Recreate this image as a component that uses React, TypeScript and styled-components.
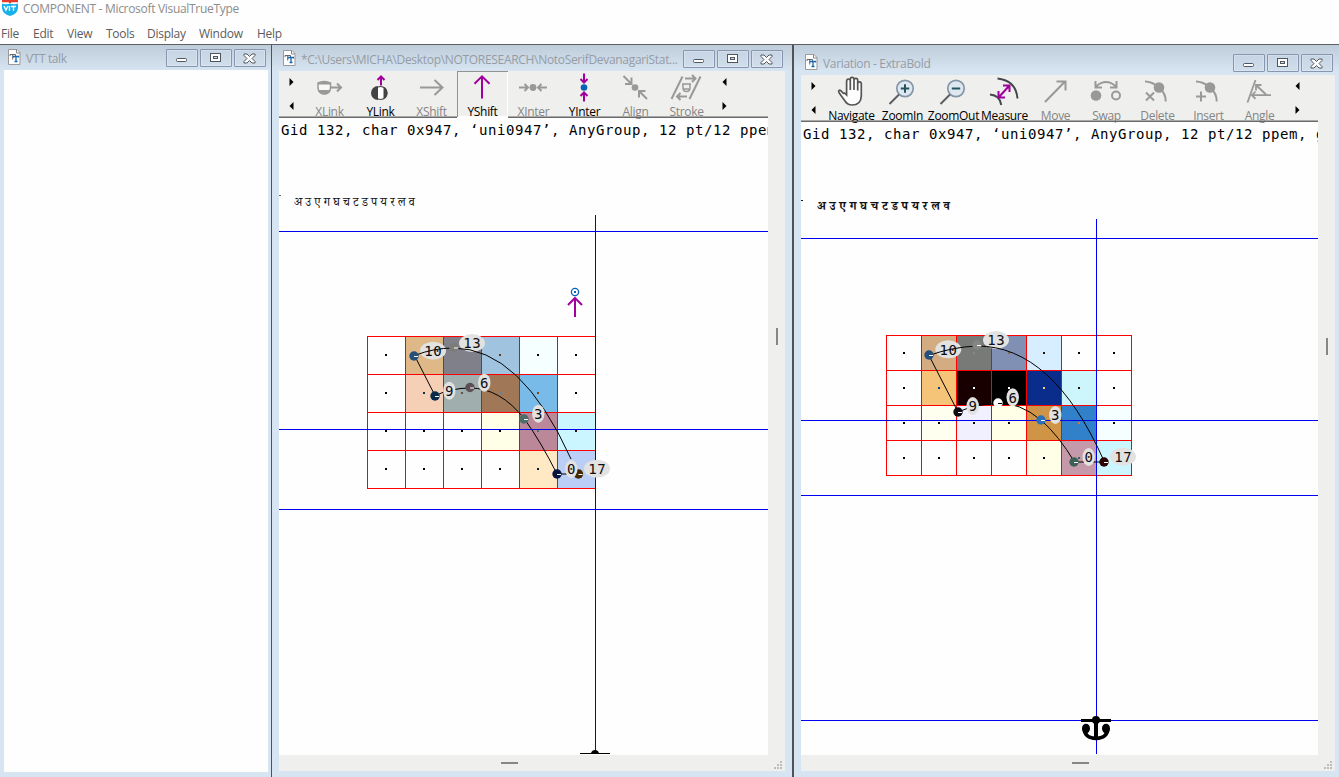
import React from "react";
import styled, { createGlobalStyle } from "styled-components";

const GlobalStyle = createGlobalStyle`
  * { box-sizing: border-box; }
  html, body { margin: 0; padding: 0; overflow: hidden; }
  body { font-family: "Open Sans", "Noto Sans", sans-serif; font-size: 12px; background: #fff; }
  svg { display: block; }
`;

const Page = styled.div`
  width: 1339px;
  height: 777px;
  display: flex;
  flex-direction: column;
  background: #fefefe;
  overflow: hidden;
`;

const AppTitle = styled.header`
  height: 20px;
  flex: none;
  display: flex;
  align-items: flex-start;
  padding-left: 2px;
  gap: 5px;
  color: #8c8c8c;
  font-size: 12px;
  line-height: 18px;
  letter-spacing: -0.31px;
  white-space: nowrap;
`;

const MenuBar = styled.nav`
  height: 24px;
  flex: none;
  display: grid;
  grid-template-columns: 32px 34px 39px 41px 52px 58px 60px;
  padding-left: 1px;
  line-height: 28px;
  color: #5c5c5c;
  letter-spacing: -0.25px;
`;

const Desktop = styled.main`
  height: 733px;
  display: flex;
  border-top: 1px solid #5e6164;
  background: #d7e4f2;
`;

const Frame = styled.section<{ $width: number; $side: number; $edge: number; $bottom?: number }>`
  width: ${(p) => p.$width}px;
  flex: none;
  display: flex;
  flex-direction: column;
  padding: 0 ${(p) => p.$edge}px ${(p) => p.$bottom ?? 6}px ${(p) => p.$side}px;
  background: linear-gradient(#bfcddb, #d7e4f2 26px);
`;

const Divider = styled.div<{ $width: number }>`
  width: ${(p) => p.$width}px;
  flex: none;
  background: #505255;
`;

const Caption = styled.div<{ $height: number; $top: number; $pad: number; $right: number }>`
  height: ${(p) => p.$height}px;
  flex: none;
  display: flex;
  align-items: flex-start;
  padding-top: ${(p) => p.$top}px;
  padding-left: ${(p) => p.$pad}px;
  margin-right: ${(p) => p.$right}px;
  color: #959ca4;
`;

const CaptionText = styled.span<{ $spacing: number }>`
  flex: 1;
  min-width: 0;
  padding: 2px 0 0 5px;
  line-height: 16px;
  letter-spacing: ${(p) => p.$spacing}px;
  white-space: nowrap;
`;

const CaptionButtons = styled.div`
  display: flex;
  gap: 2px;
`;

const CaptionButton = styled.button`
  width: 32px;
  height: 18px;
  padding: 0 1px 0 0;
  display: flex;
  align-items: center;
  justify-content: center;
  border: 1px solid #8795b0;
  border-radius: 1px;
  background: linear-gradient(#c6d4e3, #d0deec);
  box-shadow: inset 0 0 0 1px rgba(255, 255, 255, 0.25);
`;

const Blank = styled.div`
  flex: 1;
  background: #fefefe;
`;

const Client = styled.div`
  flex: 1;
  display: grid;
  grid-template-columns: 1fr 17px;
  grid-template-rows: 1fr 16px;
  min-height: 0;
  background: #efefed;
`;

const View = styled.div`
  min-width: 0;
  min-height: 0;
  display: flex;
  flex-direction: column;
  background: #fefefe;
  overflow: hidden;
`;

const SideBar = styled.div<{ $offset: number }>`
  padding: ${(p) => p.$offset}px 0 0 8px;
`;
const SideMark = styled.div`
  width: 2px;
  height: 17px;
  background: #868686;
`;
const BottomBar = styled.div<{ $offset: number }>`
  padding: 7px 0 0 ${(p) => p.$offset}px;
`;
const BottomMark = styled.div`
  width: 17px;
  height: 2px;
  background: #868686;
`;

const Toolbar = styled.div`
  height: 46px;
  flex: none;
  display: flex;
  background: #efefed;
  box-shadow: inset 0 -1px 0 #aaa;
`;

const ToolbarLine = styled.div<{ $gap?: boolean }>`
  height: 1px;
  flex: none;
  background: ${(p) =>
    p.$gap
      ? "linear-gradient(90deg, #6a6a6a 178px, #fefefe 178px, #fefefe 229px, #6a6a6a 229px)"
      : "#6a6a6a"};
`;

const Scroller = styled.div`
  width: 25px;
  flex: none;
  display: flex;
  flex-direction: column;
  align-items: center;
  padding-top: 7px;
  gap: 16px;
`;

const Tool = styled.button<{ $off?: boolean; $selected?: boolean }>`
  width: 51px;
  height: 46px;
  flex: none;
  padding: 0;
  border: 0;
  display: flex;
  flex-direction: column;
  align-items: center;
  justify-content: flex-start;
  background: transparent;
  font: 12px "Open Sans", "Noto Sans", sans-serif;
  letter-spacing: -0.3px;
  color: ${(p) => (p.$off ? "#858585" : "#000")};
  box-shadow: ${(p) =>
    p.$selected ? "inset 1px 1px 0 #929292, inset -1px -1px 0 #fefefe" : "none"};
`;

const ToolName = styled.span`
  flex: none;
  height: 11px;
  line-height: 11px;
  white-space: nowrap;
`;

const Header = styled.div`
  height: 97px;
  flex: none;
  padding-left: 2px;
`;
const Status = styled.div`
  font: 14px/25px "DejaVu Sans Mono", monospace;
  letter-spacing: 0.57px;
  color: #000;
  white-space: pre;
`;
const Sample = styled.div<{ $bold?: boolean }>`
  display: flex;
  align-items: flex-start;
  margin: 50px 0 0 -2px;
  height: 24px;
  font: ${(p) => (p.$bold ? 700 : 400)} 12px/24px "Noto Serif Devanagari", "Noto Sans Devanagari", "Noto Sans", sans-serif;
  letter-spacing: ${(p) => (p.$bold ? 0.13 : 0)}px;
  color: #111;
`;
const SampleMark = styled.span<{ $bold?: boolean }>`
  width: 2px;
  height: 1px;
  margin: ${(p) => (p.$bold ? 3 : 2)}px ${(p) => (p.$bold ? 14 : 13)}px 0 0;
  background: ${(p) => (p.$bold ? "#111" : "#666")};
`;

const Handle = ({ d, stroke = "#999", w = 2, fill = "none" }: { d: string; stroke?: string; w?: number; fill?: string }) => (
  <path d={d} stroke={stroke} strokeWidth={w} fill={fill} />
);

const PURPLE = "#a0009c";
const BLUE = "#0a64b4";
const SLATE = "#5a5e62";

const icons: Record<string, React.ReactNode> = {
  XLink: (
    <>
      <path d="M14 11.500Q20 8.500 26.500 11.500V16.500Q26 22.500 20.300 22.500T14 16.500Z" fill="#f8f8f6" stroke="#999" strokeWidth="1.500" />
      <path d="M14 12Q20 8 26.500 12V13H14ZM14.500 18.500H26Q24.500 23 20.300 23T14.500 18.500Z" fill="#999" />
      <Handle d="M27 16H36.500M33 12L37 16L33 20" />
    </>
  ),
  YLink: (
    <>
      <circle cx="25.500" cy="21.500" r="6.500" fill="#fefefe" stroke="#444" strokeWidth="1.200" />
      <path d="M23 14.500A7 7 0 0 0 23 28.500Z" fill="#444" />
      <path d="M28.500 15.200A7 7 0 0 1 28.500 27.800Z" fill="#444" />
      <Handle d="M26 14V5M22.500 8.500L26 5L29.500 8.500" stroke={PURPLE} />
    </>
  ),
  XShift: <Handle d="M14 16H36.500M28.500 8.500L36.500 16L28.500 23.500" />,
  YShift: <Handle d="M25 27V5M17.500 12.300L25 4.800L32.500 12.300" stroke={PURPLE} />,
  XInter: (
    <>
      <circle cx="25" cy="16" r="3.400" fill="#999" />
      <Handle d="M11 16H20M16.500 12.500L20 16L16.500 19.500M39 16H30M33.500 12.500L30 16L33.500 19.500" />
    </>
  ),
  YInter: (
    <>
      <circle cx="25" cy="16" r="3.300" fill={BLUE} />
      <Handle d="M25 2V11M21.500 7.500L25 11L28.500 7.500M25 30V21M21.500 24.500L25 21L28.500 24.500" stroke={PURPLE} />
    </>
  ),
  Align: (
    <>
      <circle cx="25" cy="16" r="3.300" fill="#999" />
      <Handle d="M13.500 4.500L21 12M21.500 6V12.500H15M37 27.500L29.500 20M29 26V19.500H35.500" />
    </>
  ),
  Stroke: (
    <>
      <Handle d="M10.500 27.500L21.500 5M28.500 27.500L39.500 5M24 7H34M31 3.500L34.500 7L31 10.500M26 25H16.500M19.500 21.500L16 25L19.500 28.500" />
      <Handle d="M21 12.500H30M22 12.500V16Q22 20 25.500 20T29 16V12.500M21.500 17.500H29.500" w={1.5} />
    </>
  ),
  Navigate: (
    <path
      d="M18 18.500L14.800 15.200Q13 14 12.600 15.800Q12.600 17 15 20L19 25.500Q21.500 29.500 26 29.500Q35 29.500 35.300 20.500V8.500Q35.300 6.300 33.500 6.300Q31.700 6.300 31.700 8.500V5Q31.700 2.800 29.900 2.800Q28 2.800 28 5V4Q28 1.800 26 1.800Q24.300 1.800 24.300 4V6Q24.300 3.500 22.400 3.500Q20.600 3.500 20.600 6V19.500L18 17M24.300 5V14.500M28 4V14.500M31.700 7V15"
      fill="#fefefe"
      stroke="#555"
      strokeWidth="1.700"
    />
  ),
  ZoomIn: (
    <>
      <circle cx="28" cy="13" r="8.200" fill="#dfe8f0" stroke="#8496a6" strokeWidth="1.700" />
      <Handle d="M12.500 28.500L22 19" stroke={SLATE} />
      <Handle d="M28 8.800V17.200M23.800 13H32.200" stroke="#24535f" />
    </>
  ),
  ZoomOut: (
    <>
      <circle cx="28" cy="13" r="8.200" fill="#dfe8f0" stroke="#8496a6" strokeWidth="1.700" />
      <Handle d="M12.500 28.500L22 19" stroke={SLATE} />
      <Handle d="M23.800 13H32.200" stroke="#24535f" />
    </>
  ),
  Measure: (
    <>
      <Handle d="M18.500 3Q37 5 38.500 23M11 19Q21 20 22.300 29.500" stroke="#44484c" />
      <Handle d="M20 21.500L30 10.500M24 10H30.500V16.500M19.500 15.500V22H26" stroke={PURPLE} />
    </>
  ),
  Move: <Handle d="M15 26.500L35 6M26.500 6H35.500V15" />,
  Swap: (
    <>
      <circle cx="15" cy="20" r="5.300" fill="#999" />
      <circle cx="35" cy="20" r="4" fill="none" stroke="#999" strokeWidth="2" />
      <Handle d="M15 11Q25 2 35 11M14.500 5.500V12H21M35.500 5.500V12H29" />
    </>
  ),
  Delete: (
    <>
      <circle cx="27" cy="12" r="5.300" fill="#999" />
      <Handle d="M13 6Q20 6 27 12T33.700 26M14 17L22 25M22 17L14 25" />
    </>
  ),
  Insert: (
    <>
      <circle cx="27" cy="12" r="5.300" fill="#999" />
      <Handle d="M13 6Q20 6 27 12T33.700 26M18 16V26M13 21H23" />
    </>
  ),
  Angle: <Handle d="M13.500 27L21.500 4.500M37 19.700H18M21.500 16L18 19.700L21.500 23.300M32 19L22 9.500M22 15V9.500H27.500" w={1.8} />,
};

const DocIcon = () => (
  <svg width="13" height="16" viewBox="0 0 13 16">
    <path d="M0.500 0.500H9L12 3.500V15.500H0.500Z" fill="#fefefe" stroke="#9a9a9a" />
    <path d="M8.500 0.500V4H12" fill="none" stroke="#888" />
    <path d="M2 7V5.500H7.500V7M4.700 5.500V10.500" fill="none" stroke="#666" />
    <path d="M5.500 8.500V7.500H10.500V8.500M8 7.500V12.500M6.500 12.500H9.500" fill="none" stroke="#1768b0" strokeWidth="1.300" />
  </svg>
);

const ShieldLogo = () => (
  <svg width="16" height="17" viewBox="0 0 16 17">
    <path d="M0 3.500Q3.500 5 8 3.500Q12.500 5 16 3.500V8Q15.500 14 8 16Q0.500 14 0 8Z" fill="#16b1ea" />
    <path d="M0 1.200H16M8 0V3" stroke="#e33a2c" strokeWidth="2.200" />
    <path d="M2 6L4 10.200L6 6M7.500 6V10.800M9 6.500H14M11.500 6.500V10.800" fill="none" stroke="#fefefe" strokeWidth="1.400" />
  </svg>
);

const WindowButtons = () => (
  <CaptionButtons>
    <CaptionButton aria-label="Minimize">
      <svg width="12" height="12" viewBox="0 0 12 12">
        <rect x="0.500" y="6.500" width="10" height="3" rx="1" fill="#fefefe" stroke="#50565e" />
      </svg>
    </CaptionButton>
    <CaptionButton aria-label="Maximize">
      <svg width="12" height="12" viewBox="0 0 12 12">
        <rect x="0.500" y="1.500" width="10" height="8" fill="#fefefe" stroke="#50565e" />
        <rect x="3.500" y="4.500" width="4" height="2" fill="#d5e0ec" stroke="#50565e" />
      </svg>
    </CaptionButton>
    <CaptionButton aria-label="Close">
      <svg width="13" height="11" viewBox="0 0 13 11">
        <path d="M1 1H4L6.500 3.500L9 1H12V2.500L9 5.500L12 8.500V10H9L6.500 7.500L4 10H1V8.500L4 5.500L1 2.500Z" fill="#fefefe" stroke="#50565e" />
      </svg>
    </CaptionButton>
  </CaptionButtons>
);

const Arrow = ({ left }: { left?: boolean }) => (
  <svg width="5" height="8" viewBox="0 0 5 8">
    <path d={left ? "M4.500 0V8L0.500 4Z" : "M0.500 0V8L4.500 4Z"} fill="#000" />
  </svg>
);

type ToolSpec = [name: string, enabled?: boolean, selected?: boolean];

const Tools = ({ items }: { items: ToolSpec[] }) => (
  <Toolbar>
    <Scroller><Arrow /><Arrow left /></Scroller>
    {items.map(([name, on, selected]) => (
      <Tool key={name} $off={!on} $selected={selected}>
        <svg width="51" height="35" viewBox="0 -0.5 51 35">{icons[name]}</svg>
        <ToolName>{name}</ToolName>
      </Tool>
    ))}
    <Scroller><Arrow left /><Arrow /></Scroller>
  </Toolbar>
);

interface Point { n: string; x: number; y: number; fill: string; lx: number; ly: number }
interface Glyph {
  view: [number, number, number, number];
  origin: [number, number];
  cell: number;
  center: number;
  rows: string[][];
  hLines: number[];
  vLine: [number, number];
  outline: string;
  points: Point[];
}

const W = "#fefefe";

const invert = (hex: string) => "#" + (0xffffff - parseInt(hex.slice(1), 16)).toString(16).padStart(6, "0");

const PointMark = ({ p }: { p: Point }) => (
  <>
    <ellipse cx={p.lx} cy={p.ly} rx={p.n.length > 1 ? 13 : 6.2} ry="9" fill="#e2e2e0" />
    <text
      x={p.lx + 0.3}
      y={p.ly + 5.3}
      textAnchor="middle"
      fontFamily="DejaVu Sans Mono, monospace"
      fontSize="14"
      letterSpacing="0.57"
      fill="#0c0c14"
    >
      {p.n}
    </text>
  </>
);

const GlyphCanvas = ({ glyph, children }: { glyph: Glyph; children?: React.ReactNode }) => {
  const { view, origin: [ox, oy], cell, center, rows, hLines, vLine, points } = glyph;
  const cols = rows[0].length;
  const under = points.filter((p) => p.n === "10" || p.n === "13");
  const over = points.filter((p) => !under.includes(p));
  return (
    <svg width={view[2]} height={view[3]} viewBox={view.join(" ")}>
      <g shapeRendering="crispEdges">
        {rows.map((row, j) =>
          row.map((fill, i) => (
            <rect key={`${i}-${j}`} x={ox + i * cell} y={oy + j * cell} width={cell} height={cell} fill={fill} />
          ))
        )}
        {rows.map((_, j) => <rect key={j} x={ox} y={oy + j * cell} width={cols * cell + 1} height="1" fill="#f00" />)}
        <rect x={ox} y={oy + rows.length * cell} width={cols * cell + 1} height="1" fill="#f00" />
        {Array.from({ length: cols + 1 }, (_, i) => (
          <rect key={i} x={ox + i * cell} y={oy} width="1" height={rows.length * cell + 1} fill="#f00" />
        ))}
        {rows.map((row, j) =>
          row.map((fill, i) => (
            <rect key={`${i}-${j}`} x={ox + i * cell + center} y={oy + j * cell + center} width="2" height="2" fill={invert(fill)} />
          ))
        )}
        {hLines.map((y) => <rect key={y} x={view[0]} y={y} width={view[2]} height="1" fill="#0000f0" />)}
        <rect x={vLine[0]} y={view[1]} width="1" height={vLine[1] - view[1]} fill="#0000f0" />
      </g>
      {under.map((p) => <PointMark key={p.n} p={p} />)}
      <path d={glyph.outline} fill="none" stroke="#000" strokeWidth="1" />
      {points.map((p) => (
        <g key={p.n}>
          <circle cx={p.x} cy={p.y} r="4.700" fill={p.fill} />
          <path d={`M${p.x} ${p.y + 0.5}h4`} stroke={p.fill === W ? "#000" : "#fefefe"} strokeWidth="1" />
        </g>
      ))}
      {over.map((p) => <PointMark key={p.n} p={p} />)}
      {children}
    </svg>
  );
};

const main: Glyph = {
  view: [279, 215, 489, 540],
  origin: [367, 336],
  cell: 38,
  center: 18,
  rows: [
    [W, "#deb887", "#80808a", "#a0c4e0", "#f5ffff", W],
    [W, "#f5cfb6", "#a0aeae", "#a07858", "#78bae8", W],
    [W, W, W, "#ffffe8", "#ba8898", "#ccf6ff"],
    [W, W, W, W, "#ffe8c4", "#bacef6"],
  ],
  hLines: [231, 429, 509],
  vLine: [595, 751],
  outline:
    "M571 459Q521 348 453 348Q434 348 414.500 355.500L435 395.500Q452 388 470 388Q500 388 524.500 419Q541 442 557 474H578",
  points: [
    { n: "10", x: 414, y: 356, fill: "#24507c", lx: 433, ly: 350.7 },
    { n: "13", x: 454, y: 347.5, fill: "#7c7c78", lx: 472, ly: 343 },
    { n: "9", x: 435, y: 396, fill: "#0a2c4c", lx: 449.3, ly: 390.7 },
    { n: "6", x: 470, y: 387.5, fill: "#5c5054", lx: 484.3, ly: 382.7 },
    { n: "3", x: 524, y: 419, fill: "#4c6c6c", lx: 538.3, ly: 413.7 },
    { n: "17", x: 578.5, y: 474, fill: "#442800", lx: 597, ly: 468.7 },
    { n: "0", x: 557, y: 474, fill: "#061440", lx: 571.3, ly: 469 },
  ],
};

const variation: Glyph = {
  view: [801, 219, 517, 536],
  origin: [886, 335],
  cell: 35,
  center: 17,
  rows: [
    [W, "#d4ac82", "#787a78", "#8090b4", "#d6eeff", W, W],
    [W, "#f6c478", "#180000", "#000000", "#0a2c8a", "#ccf6fc", W],
    [W, "#fffff0", "#f0f0ff", "#ffffe8", "#d09446", "#3080ca", "#f5ffff"],
    [W, W, W, W, "#ffffe8", "#c49aaa", "#ccf6ff"],
  ],
  hLines: [238, 420, 495, 720],
  vLine: [1096, 754],
  outline:
    "M1104 461Q1053 346 977 346Q952 347 929 355.500L958 412Q976 404 998 403.500Q1019 402 1041 420Q1059 436 1074.500 462H1104",
  points: [
    { n: "10", x: 929, y: 355, fill: "#24507c", lx: 948.3, ly: 349.3 },
    { n: "13", x: 977, y: 345, fill: "#848684", lx: 996, ly: 340 },
    { n: "9", x: 958, y: 412, fill: "#0a0a10", lx: 972.7, ly: 406 },
    { n: "6", x: 998, y: 403, fill: W, lx: 1012.7, ly: 397.3 },
    { n: "3", x: 1041, y: 420, fill: "#2a70b8", lx: 1055.3, ly: 415 },
    { n: "0", x: 1074, y: 462, fill: "#3c6058", lx: 1088.7, ly: 457 },
    { n: "17", x: 1104, y: 462, fill: "#2c0000", lx: 1123, ly: 456.7 },
  ],
};

const Grip = () => (
  <svg width="17" height="16" viewBox="0 0 17 16" shapeRendering="crispEdges">
    {[[12, 6], [9, 9], [12, 9], [6, 12], [9, 12], [12, 12]].map(([x, y]) => (
      <rect key={`${x}-${y}`} x={x} y={y} width="2" height="2" fill="#bdbdbb" />
    ))}
  </svg>
);

const letters = "अ उ ए ग घ च ट ड प य र ल व";
const status = "Gid 132, char 0x947, ‘uni0947’, AnyGroup, 12 pt/12 ppem, gray";

export default function App() {
  return (
    <>
      <GlobalStyle />
      <Page>
        <AppTitle>
          <ShieldLogo />
          <span>COMPONENT - Microsoft VisualTrueType</span>
        </AppTitle>
        <MenuBar>
          {["File", "Edit", "View", "Tools", "Display", "Window", "Help"].map((m) => <span key={m}>{m}</span>)}
        </MenuBar>
        <Desktop>
          <Frame $width={271} $side={4} $edge={3} $bottom={5}>
            <Caption $height={25} $top={4} $pad={4} $right={2}>
              <DocIcon />
              <CaptionText $spacing={-0.4}>VTT talk</CaptionText>
              <WindowButtons />
            </Caption>
            <Blank />
          </Frame>
          <Divider $width={1} />
          <Frame $width={520} $side={7} $edge={7}>
            <Caption $height={26} $top={5} $pad={4} $right={2}>
              <DocIcon />
              <CaptionText $spacing={-0.31}>{"*C:\\Users\\MICHA\\Desktop\\NOTORESEARCH\\NotoSerifDevanagariStat..."}</CaptionText>
              <WindowButtons />
            </Caption>
            <Client>
              <View>
                <Tools
                  items={[["XLink"], ["YLink", true], ["XShift"], ["YShift", true, true], ["XInter"], ["YInter", true], ["Align"], ["Stroke"]]}
                />
                <ToolbarLine $gap />
                <Header>
                  <Status>{status}</Status>
                  <Sample><SampleMark />{letters}</Sample>
                </Header>
                <GlyphCanvas glyph={main}>
                  <circle cx="575" cy="292" r="3.600" fill="#fefefe" stroke={BLUE} strokeWidth="1.300" />
                  <rect x="574" y="291" width="2" height="2" fill={BLUE} />
                  <path d="M575 317V298.500M568 305L575 298L582 305" fill="none" stroke={PURPLE} strokeWidth="2" />
                  <path d="M580 753H610V754H580ZM591 753Q592 750 595 750T599 753Z" fill="#000" />
                </GlyphCanvas>
              </View>
              <SideBar $offset={257}><SideMark /></SideBar>
              <BottomBar $offset={222}><BottomMark /></BottomBar>
              <Grip />
            </Client>
          </Frame>
          <Divider $width={2} />
          <Frame $width={545} $side={7} $edge={4}>
            <Caption $height={30} $top={9} $pad={4} $right={2}>
              <DocIcon />
              <CaptionText $spacing={-0.34}>Variation - ExtraBold</CaptionText>
              <WindowButtons />
            </Caption>
            <Client>
              <View>
                <Tools
                  items={[["Navigate", true], ["ZoomIn", true], ["ZoomOut", true], ["Measure", true], ["Move"], ["Swap"], ["Delete"], ["Insert"], ["Angle"]]}
                />
                <ToolbarLine />
                <Header>
                  <Status>{status}</Status>
                  <Sample $bold><SampleMark $bold />{letters}</Sample>
                </Header>
                <GlyphCanvas glyph={variation}>
                  <path d="M1081 719H1111V722H1081Z" fill="#000" />
                  <circle cx="1096" cy="720" r="4" fill="#000" />
                  <path d="M1096 720V738" stroke="#000" strokeWidth="4" />
                  <path d="M1084 729Q1085 738 1096 738.500Q1107 738 1108 729" fill="none" stroke="#000" strokeWidth="3.400" />
                  <ellipse cx="1086" cy="728.500" rx="4" ry="4.800" fill="#000" />
                  <ellipse cx="1106" cy="728.500" rx="4" ry="4.800" fill="#000" />
                </GlyphCanvas>
              </View>
              <SideBar $offset={263}><SideMark /></SideBar>
              <BottomBar $offset={271}><BottomMark /></BottomBar>
              <Grip />
            </Client>
          </Frame>
        </Desktop>
      </Page>
    </>
  );
}
